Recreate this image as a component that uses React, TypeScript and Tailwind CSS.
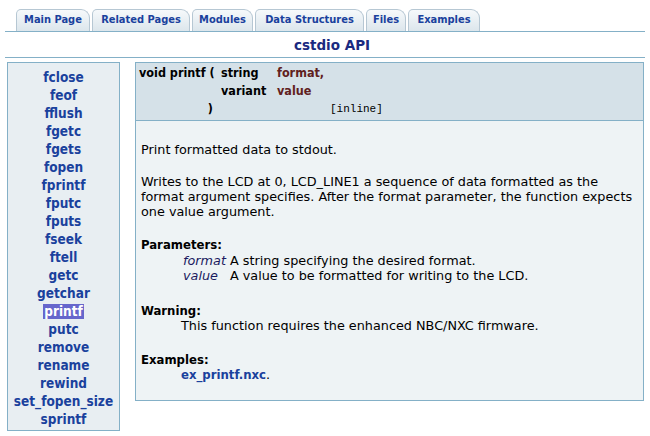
import React from "react";

const tabs = [
  { label: "Main Page", w: "w-[74px]" },
  { label: "Related Pages", w: "w-[98px]" },
  { label: "Modules", w: "w-[61px]" },
  { label: "Data Structures", w: "w-[109px]" },
  { label: "Files", w: "w-[40px]" },
  { label: "Examples", w: "w-[72px]" },
];

const funcs = [
  "fclose", "feof", "fflush", "fgetc", "fgets", "fopen", "fprintf", "fputc", "fputs", "fseek",
  "ftell", "getc", "getchar", "printf", "putc", "remove", "rename", "rewind", "set_fopen_size", "sprintf",
];

const cond = "font-['DejaVu_Sans_Condensed','DejaVu_Sans',sans-serif]";

export default function App() {
  return (
    <div className="w-[650px] h-[436px] bg-white overflow-hidden font-['DejaVu_Sans',sans-serif] text-[12.8px] text-black">
      {/* TABS */}
      <div className={`mx-[5px] pt-[9px] pl-[11px] flex gap-[2px] border-b border-[#84b0c7] ${cond}`}>
        {tabs.map((t) => (
          <div
            key={t.label}
            className={`${t.w} h-[22px] flex items-center justify-center rounded-tl-[5px] rounded-tr-[9px] border border-b-0 border-[#b6c7d3] bg-gradient-to-b from-[#f6f9fb] to-[#dce6ec] text-[11px] font-bold text-[#1a419d]`}
          >
            {t.label}
          </div>
        ))}
      </div>

      {/* TITLE */}
      <div className="mx-[5px] h-[26px] flex items-end justify-center pl-[14px] pb-[2px] border-b border-[#84b0c7] text-[13.5px] font-bold text-[#1a2a80]">
        cstdio API
      </div>

      <div className="flex items-start gap-[15px] pl-[7px] pt-[4px]">
        {/* SIDEBAR */}
        <div className={`w-[113px] h-[369px] border border-[#84b0c7] bg-[#e8eef2] pt-[5px] flex flex-col items-center ${cond}`}>
          {funcs.map((f) => (
            <div key={f} className="h-[18px] flex items-center text-[13.5px] font-bold text-[#1a419d]">
              {f === "printf" ? (
                <span className="bg-[#6666cc] text-white px-[1px] leading-[15px]">{f}</span>
              ) : (
                f
              )}
            </div>
          ))}
        </div>

        {/* MAIN */}
        <div className="w-[509px] h-[339px] border border-[#84b0c7] bg-[#eef3f5]">
          <div className={`h-[58px] bg-[#d5e1e8] border-b border-[#84b0c7] pl-[3px] pt-[1px] font-bold text-[12.5px] ${cond}`}>
            <div className="flex h-[18px] items-center">
              <span className="w-[82px]">void printf (</span>
              <span className="w-[56px]">string</span>
              <span className="text-[#602020]">format,</span>
            </div>
            <div className="flex h-[18px] items-center">
              <span className="w-[82px]"></span>
              <span className="w-[56px]">variant</span>
              <span className="text-[#602020]">value</span>
            </div>
            <div className="flex h-[18px] items-center">
              <span className="w-[74px] text-right">)</span>
              <span className="ml-[117px] font-normal font-['Liberation_Mono',monospace] text-[11px]">[inline]</span>
            </div>
          </div>

          <div className="pl-[5px] pr-[2px] leading-[15px]">
            <p className="mt-[21px]">Print formatted data to stdout.</p>
            <p className="mt-[17px]">
              Writes to the LCD at 0, LCD_LINE1 a sequence of data formatted as the format argument specifies. After the format parameter, the function expects one value argument.
            </p>

            <div className={`mt-[18px] font-bold text-[13px] ${cond}`}>Parameters:</div>
            <div className="mt-[1px] pl-[42px] grid grid-cols-[auto_1fr] gap-x-[4px]">
              <i className="text-[#1a1a60]">format</i>
              <span>A string specifying the desired format.</span>
              <i className="text-[#1a1a60]">value</i>
              <span>A value to be formatted for writing to the LCD.</span>
            </div>

            <div className={`mt-[20px] font-bold text-[13px] ${cond}`}>Warning:</div>
            <div className="pl-[40px]">This function requires the enhanced NBC/NXC firmware.</div>

            <div className={`mt-[19px] font-bold text-[13px] ${cond}`}>Examples:</div>
            <div className="pl-[40px]">
              <span className={`font-bold text-[13px] text-[#1a419d] ${cond}`}>ex_printf.nxc</span>.
            </div>
          </div>
        </div>
      </div>
    </div>
  );
}
